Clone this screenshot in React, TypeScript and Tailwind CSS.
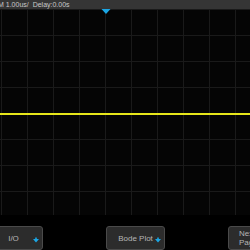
import React from "react";

const xs = Array.from({ length: 10 }, (_, i) => 1.5 + i * 26);
const ys = Array.from({ length: 9 }, (_, i) => 0.5 + i * 26);

function Grid() {
    return (
        <svg width={250} height={208} className="block">
            <rect width={250} height={208} fill="#050505" />
            {xs.map((x) => (
                <line key={"x" + x} x1={x} y1={0} x2={x} y2={208} stroke="#1a1a1a" strokeWidth={1} />
            ))}
            {ys.map((y) => (
                <line key={"y" + y} x1={0} y1={y} x2={250} y2={y} stroke="#1a1a1a" strokeWidth={1} />
            ))}
            <rect x={0} y={104} width={250} height={2} fill="#e6e61a" />
            <polygon points="101.5,0 110.5,0 106,5" fill="#1ba6e4" />
        </svg>
    );
}

function Mark() {
    return (
        <svg width={6} height={6} viewBox="0 0 6 6" className="absolute right-[3px] top-[10px]">
            <polygon points="0,2 6,2 3,5.5" fill="#1ba6e4" />
            <rect x={2.2} y={0.5} width={1.6} height={2} fill="#1ba6e4" />
        </svg>
    );
}

function SoftKey({ label, mark, hidden, left }: { label?: React.ReactNode; mark?: boolean; hidden?: boolean; left?: boolean }) {
    if (hidden) return <div className="w-[59px] shrink-0" />;
    return (
        <div
            className={
                "relative w-[59px] h-[24px] shrink-0 rounded-[3px] border border-[#4a4a4a] bg-[#2c2c2c] flex items-center text-[8px] leading-[9px] text-[#b5b5b5] " +
                (left ? "justify-start pl-[10px] text-left" : "justify-center text-center")
            }
        >
            {label}
            {mark && <Mark />}
        </div>
    );
}

export default function App() {
    return (
        <div className="w-[250px] h-[250px] overflow-hidden bg-black flex flex-col" style={{ fontFamily: '"Liberation Sans", Arial, sans-serif' }}>
            <div className="h-[9px] bg-[#353535] text-[7px] leading-[9px] text-[#c8c8c8] whitespace-nowrap -ml-[2px]">
                M 1.00us/&nbsp; Delay:0.00s
            </div>
            <Grid />
            <div className="flex gap-[2px] pt-[11px] -ml-[16px]">
                <SoftKey label="I/O" mark />
                <SoftKey hidden />
                <SoftKey label="Bode Plot" mark />
                <SoftKey hidden />
                <SoftKey label={<span>Next<br />Page</span>} left />
            </div>
        </div>
    );
}
